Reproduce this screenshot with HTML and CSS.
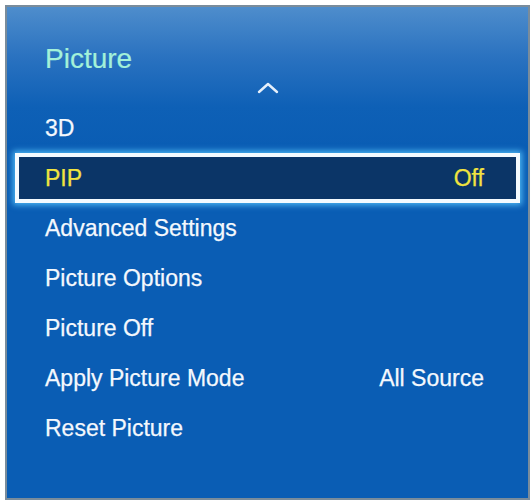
FILE: index.html
```html
<!DOCTYPE html>
<html lang="en">
<head>
<meta charset="utf-8">
<title>Picture</title>
<link rel="stylesheet" href="styles.css">
</head>
<body>
<div class="panel">
  <div class="header">
    <div class="title">Picture</div>
    <div class="chevron">
      <svg width="22" height="12" viewBox="0 0 22 12"><path d="M2 10 L11 2 L20 10" fill="none" stroke="#e6f0fb" stroke-width="2.4" stroke-linecap="round" stroke-linejoin="round"/></svg>
    </div>
  </div>
  <ul class="menu">
    <li class="row"><span>3D</span></li>
    <li class="row active"><span>PIP</span><span class="value">Off</span></li>
    <li class="row"><span>Advanced Settings</span></li>
    <li class="row"><span>Picture Options</span></li>
    <li class="row"><span>Picture Off</span></li>
    <li class="row"><span>Apply Picture Mode</span><span class="value">All Source</span></li>
    <li class="row"><span>Reset Picture</span></li>
  </ul>
</div>
</body>
</html>
```
FILE: styles.css
```css
html, body {
  margin: 0;
  padding: 0;
  background: #ffffff;
}
body {
  font-family: "Liberation Sans", Arial, sans-serif;
}
.panel {
  box-sizing: border-box;
  margin: 5px 0 0 5px;
  width: 525px;
  height: 495px;
  border: 2px solid #7a8c9b;
  background: linear-gradient(to bottom, #4e8dcc 0px, #2a72c0 50px, #0e60b6 100px, #0a5db4 140px, #0a5db4 100%);
  padding-top: 36px;
}
.header {
  display: flex;
  flex-direction: column;
}
.title {
  padding-left: 38px;
  font-size: 28px;
  line-height: 32px;
  color: #a3f1d9;
  -webkit-text-stroke: 0.2px #a3f1d9;
}
.chevron {
  display: flex;
  justify-content: center;
  margin-top: 7px;
  margin-bottom: 9px;
  height: 12px;
}
.chevron svg {
  display: block;
}
.menu {
  list-style: none;
  margin: 0;
  padding: 0;
}
.row {
  box-sizing: border-box;
  height: 50px;
  margin: 0 8px;
  border: 4px solid transparent;
  padding: 1px 32px 0 26px;
  display: flex;
  justify-content: space-between;
  font-size: 23px;
  line-height: 41px;
  color: #f4f8fd;
  -webkit-text-stroke: 0.25px currentColor;
}
.row.active {
  background: #0b3567;
  border-color: #f4fbff;
  color: #f1e33f;
  box-shadow: 0 0 6px 2px rgba(90, 200, 255, 0.85);
}
.value {
  text-align: right;
}
```
